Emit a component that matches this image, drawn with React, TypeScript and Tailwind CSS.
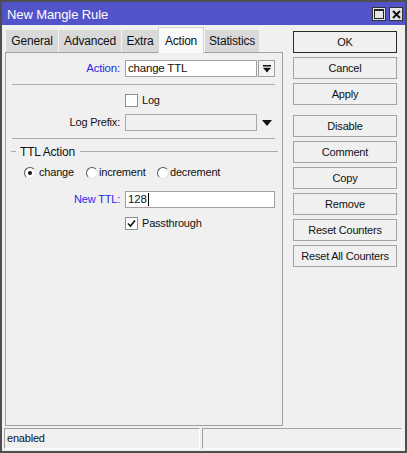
import React from "react";

const font = "font-['Liberation_Sans',Arial,sans-serif] text-[11px] tracking-[-0.2px]";

function Tab({ label, w, active }: { label: string; w: string; active?: boolean }) {
  if (active) {
    return (
      <div className={`${w} h-[26px] -mb-px relative z-10 bg-[#f9f9f9] border-x border-t border-[#d4d4d4] flex items-center justify-center text-[#111] text-[12px]`}>
        {label}
      </div>
    );
  }
  return (
    <div className={`${w} h-[22px] bg-[#d9d9d9] border-l border-[#f4f4f4] flex items-center justify-center text-[#111] text-[12px]`}>
      {label}
    </div>
  );
}

function Btn({ label, primary, className = "" }: { label: string; primary?: boolean; className?: string }) {
  return (
    <div
      className={`h-[22px] w-[104px] flex items-center justify-center bg-[#f0f0f0] text-[#111] border ${
        primary ? "border-[#2a2a2a]" : "border-[#a3a3a3]"
      } ${className}`}
    >
      {label}
    </div>
  );
}

function Radio({ checked }: { checked?: boolean }) {
  return (
    <div className="w-[12px] h-[12px] rounded-full bg-white border-[1.5px] border-[#555] border-r-[#e2e2e2] border-b-[#e2e2e2] flex items-center justify-center">
      {checked && <div className="w-[4px] h-[4px] rounded-full bg-[#111]" />}
    </div>
  );
}

function Check({ checked }: { checked?: boolean }) {
  return (
    <div className="w-[13px] h-[13px] bg-white border border-[#8f8f8f] flex items-center justify-center">
      {checked && (
        <svg width="9" height="9" viewBox="0 0 9 9">
          <path d="M1 4.5 L3.5 7 L8 1.5" stroke="#111" strokeWidth="1.6" fill="none" />
        </svg>
      )}
    </div>
  );
}

export default function App() {
  return (
    <div className={`w-[407px] h-[453px] bg-[#f0f0f0] border-2 border-[#4e4e4e] flex flex-col ${font}`}>
      {/* title bar */}
      <div className="h-[23px] bg-[#5252c9] flex items-start justify-between pl-[5px] pr-[2px]">
        <div className="text-white text-[13px] tracking-[-0.1px] pt-[5px] leading-[15px]">New Mangle Rule</div>
        <div className="flex gap-[3px] pt-[5px]">
          <div className="w-[14px] h-[14px] bg-[#e6e6e6] border border-[#333] flex items-center justify-center">
            <div className="w-[10px] h-[10px] border border-[#222] border-t-2" />
          </div>
          <div className="w-[14px] h-[14px] bg-[#e6e6e6] border border-[#333] flex items-center justify-center">
            <svg width="9" height="9" viewBox="0 0 9 9">
              <path d="M1 1 L8 8 M8 1 L1 8" stroke="#111" strokeWidth="2" />
            </svg>
          </div>
        </div>
      </div>

      {/* main */}
      <div className="h-[401px] flex pl-[3px]">
        <div className="w-[278px] flex flex-col pt-[2px]">
          <div className="h-[25px] flex items-end">
            <Tab label="General" w="w-[53px]" />
            <Tab label="Advanced" w="w-[63px]" />
            <Tab label="Extra" w="w-[37px]" />
            <Tab label="Action" w="w-[46px]" active />
            <Tab label="Statistics" w="w-[55px]" />
          </div>
          <div className="h-[374px] border border-[#a0a0a0] flex flex-col">
            {/* Action */}
            <div className="mt-[7px] h-[17px] flex items-center">
              <div className="w-[114px] mr-[5px] text-right text-[#2828e6] text-[11.5px]">Action:</div>
              <div className="w-[132px] h-[17px] bg-white border border-[#a0a0a0] pl-[2px] flex items-center text-[#111] text-[11.5px]">
                change TTL
              </div>
              <div className="ml-[1px] w-[17px] h-[17px] border border-[#a0a0a0] bg-[#f4f4f4] flex items-center justify-center">
                <svg width="8" height="8" viewBox="0 0 8 8">
                  <rect x="0" y="0" width="8" height="1.5" fill="#111" />
                  <polygon points="0,2.8 8,2.8 4,7.5" fill="#111" />
                </svg>
              </div>
            </div>
            <div className="mt-[7px] ml-[6px] w-[263px] border-t border-[#acacac]" />
            {/* Log */}
            <div className="mt-[9px] h-[13px] flex items-center">
              <div className="w-[119px]" />
              <Check />
              <span className="ml-[4px] text-[#111]">Log</span>
            </div>
            {/* Log Prefix */}
            <div className="mt-[7px] h-[17px] flex items-center">
              <div className="w-[114px] mr-[5px] text-right text-[#111]">Log Prefix:</div>
              <div className="w-[132px] h-[17px] bg-[#f0f0f0] border border-[#a8a8a8]" />
              <svg className="ml-[5px]" width="10" height="6" viewBox="0 0 10 6">
                <polygon points="0,0 10,0 5,6" fill="#111" />
              </svg>
            </div>
            <div className="mt-[7px] ml-[6px] w-[263px] border-t border-[#acacac]" />
            {/* TTL Action group header */}
            <div className="mt-[6px] h-[13px] flex items-center ml-[5px]">
              <div className="w-[5px] border-t border-[#acacac]" />
              <span className="ml-[4px] text-[#111] text-[12px]">TTL Action</span>
              <div className="ml-[5px] w-[198px] border-t border-[#acacac]" />
            </div>
            {/* radios */}
            <div className="mt-[8px] h-[13px] flex items-center pl-[18px] text-[#111]">
              <div className="w-[62px] flex items-center">
                <Radio checked />
                <span className="ml-[3px]">change</span>
              </div>
              <div className="w-[71px] flex items-center">
                <Radio />
                <span className="ml-[1px]">increment</span>
              </div>
              <div className="flex items-center">
                <Radio />
                <span className="ml-[1px]">decrement</span>
              </div>
            </div>
            {/* New TTL */}
            <div className="mt-[12px] h-[17px] flex items-center">
              <div className="w-[114px] mr-[5px] text-right text-[#2828e6]">New TTL:</div>
              <div className="w-[150px] h-[17px] bg-white border border-[#a0a0a0] pl-[2px] flex items-center text-[#111] text-[11.5px]">
                128<span className="ml-[1px] h-[13px] border-l border-[#000]" />
              </div>
            </div>
            {/* Passthrough */}
            <div className="mt-[9px] h-[13px] flex items-center">
              <div className="w-[119px]" />
              <Check checked />
              <span className="ml-[4px] text-[#111]">Passthrough</span>
            </div>
          </div>
        </div>

        {/* buttons */}
        <div className="ml-[10px] pt-[6px] flex flex-col">
          <Btn label="OK" primary />
          <Btn label="Cancel" className="mt-[4px]" />
          <Btn label="Apply" className="mt-[4px]" />
          <Btn label="Disable" className="mt-[10px]" />
          <Btn label="Comment" className="mt-[4px]" />
          <Btn label="Copy" className="mt-[4px]" />
          <Btn label="Remove" className="mt-[4px]" />
          <Btn label="Reset Counters" className="mt-[4px]" />
          <Btn label="Reset All Counters" className="mt-[4px]" />
        </div>
      </div>

      {/* status bar */}
      <div className="mt-[2px] h-[21px] flex pl-[2px] gap-[2px]">
        <div className="w-[196px] h-[21px] border border-[#a0a0a0] border-r-white border-b-white pl-[2px] flex items-center text-[#111]">
          enabled
        </div>
        <div className="w-[200px] h-[21px] border border-[#a0a0a0] border-r-white border-b-white" />
      </div>
    </div>
  );
}
